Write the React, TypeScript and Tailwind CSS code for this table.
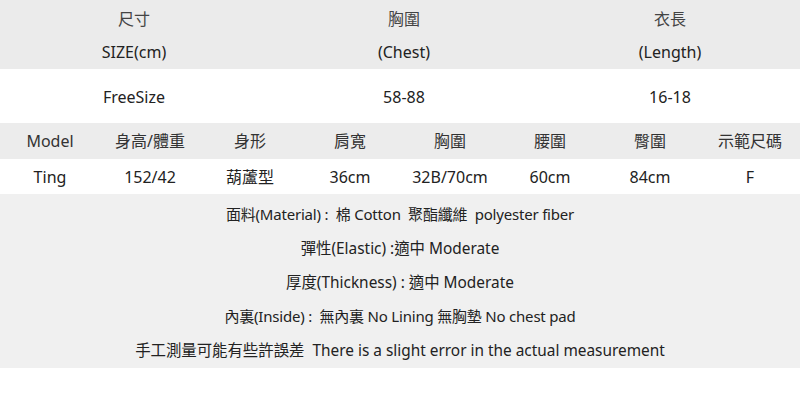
const font = {
  fontFamily: '"Noto Sans", "Noto Sans CJK TC", sans-serif',
};

const topHeader = [
  ["尺寸", "SIZE(cm)"],
  ["胸圍", "(Chest)"],
  ["衣長", "(Length)"],
];
const topValues = ["FreeSize", "58-88", "16-18"];

const modelHeader = ["Model", "身高/體重", "身形", "肩寬", "胸圍", "腰圍", "臀圍", "示範尺碼"];
const modelValues = ["Ting", "152/42", "葫蘆型", "36cm", "32B/70cm", "60cm", "84cm", "F"];

const notes = [
  { text: "面料(Material) :  棉 Cotton  聚酯纖維  polyester fiber", cls: "text-[15px] tracking-[-0.2px]" },
  { text: "彈性(Elastic) :適中 Moderate", cls: "text-[15.4px]" },
  { text: "厚度(Thickness) : 適中 Moderate", cls: "text-[15.4px]" },
  { text: "內裏(Inside) :  無內裏 No Lining 無胸墊 No chest pad", cls: "text-[15px] tracking-[-0.2px]" },
  { text: "手工測量可能有些許誤差  There is a slight error in the actual measurement", cls: "text-[15.4px]" },
];

const App = () => {
  return (
    <div className="w-[800px] h-[403px] bg-white text-[#222] overflow-hidden" style={font}>
      {/* size table */}
      <div className="bg-[#ebebeb] h-[69px] pt-[2px] grid grid-cols-[268px_272px_260px]">
        {topHeader.map(([zh, en]) => (
          <div key={en} className="flex flex-col items-center">
            <div className="h-[33px] flex items-center text-[16px] text-[#444]">{zh}</div>
            <div className="h-[33px] flex items-center text-[16px]">{en}</div>
          </div>
        ))}
      </div>
      <div className="h-[54px] grid grid-cols-[268px_272px_260px] items-center pt-[2px]">
        {topValues.map((v) => (
          <div key={v} className="text-center text-[16px]">
            {v}
          </div>
        ))}
      </div>

      {/* model table */}
      <div className="bg-[#ececec] h-[36px] grid grid-cols-8 items-center">
        {modelHeader.map((h) => (
          <div key={h} className="text-center text-[16px] text-[#333]">
            {h}
          </div>
        ))}
      </div>
      <div className="h-[35px] grid grid-cols-8 items-center">
        {modelValues.map((v, i) => (
          <div key={i} className="text-center text-[16px]">
            {v}
          </div>
        ))}
      </div>

      {/* notes */}
      <div className="bg-[#f0f0f0] h-[174px] pt-[3px] flex flex-col">
        {notes.map((n) => (
          <div
            key={n.text}
            className={`h-[34.5px] flex items-center justify-center whitespace-pre ${n.cls}`}
          >
            {n.text}
          </div>
        ))}
      </div>
    </div>
  );
};

export default App;
